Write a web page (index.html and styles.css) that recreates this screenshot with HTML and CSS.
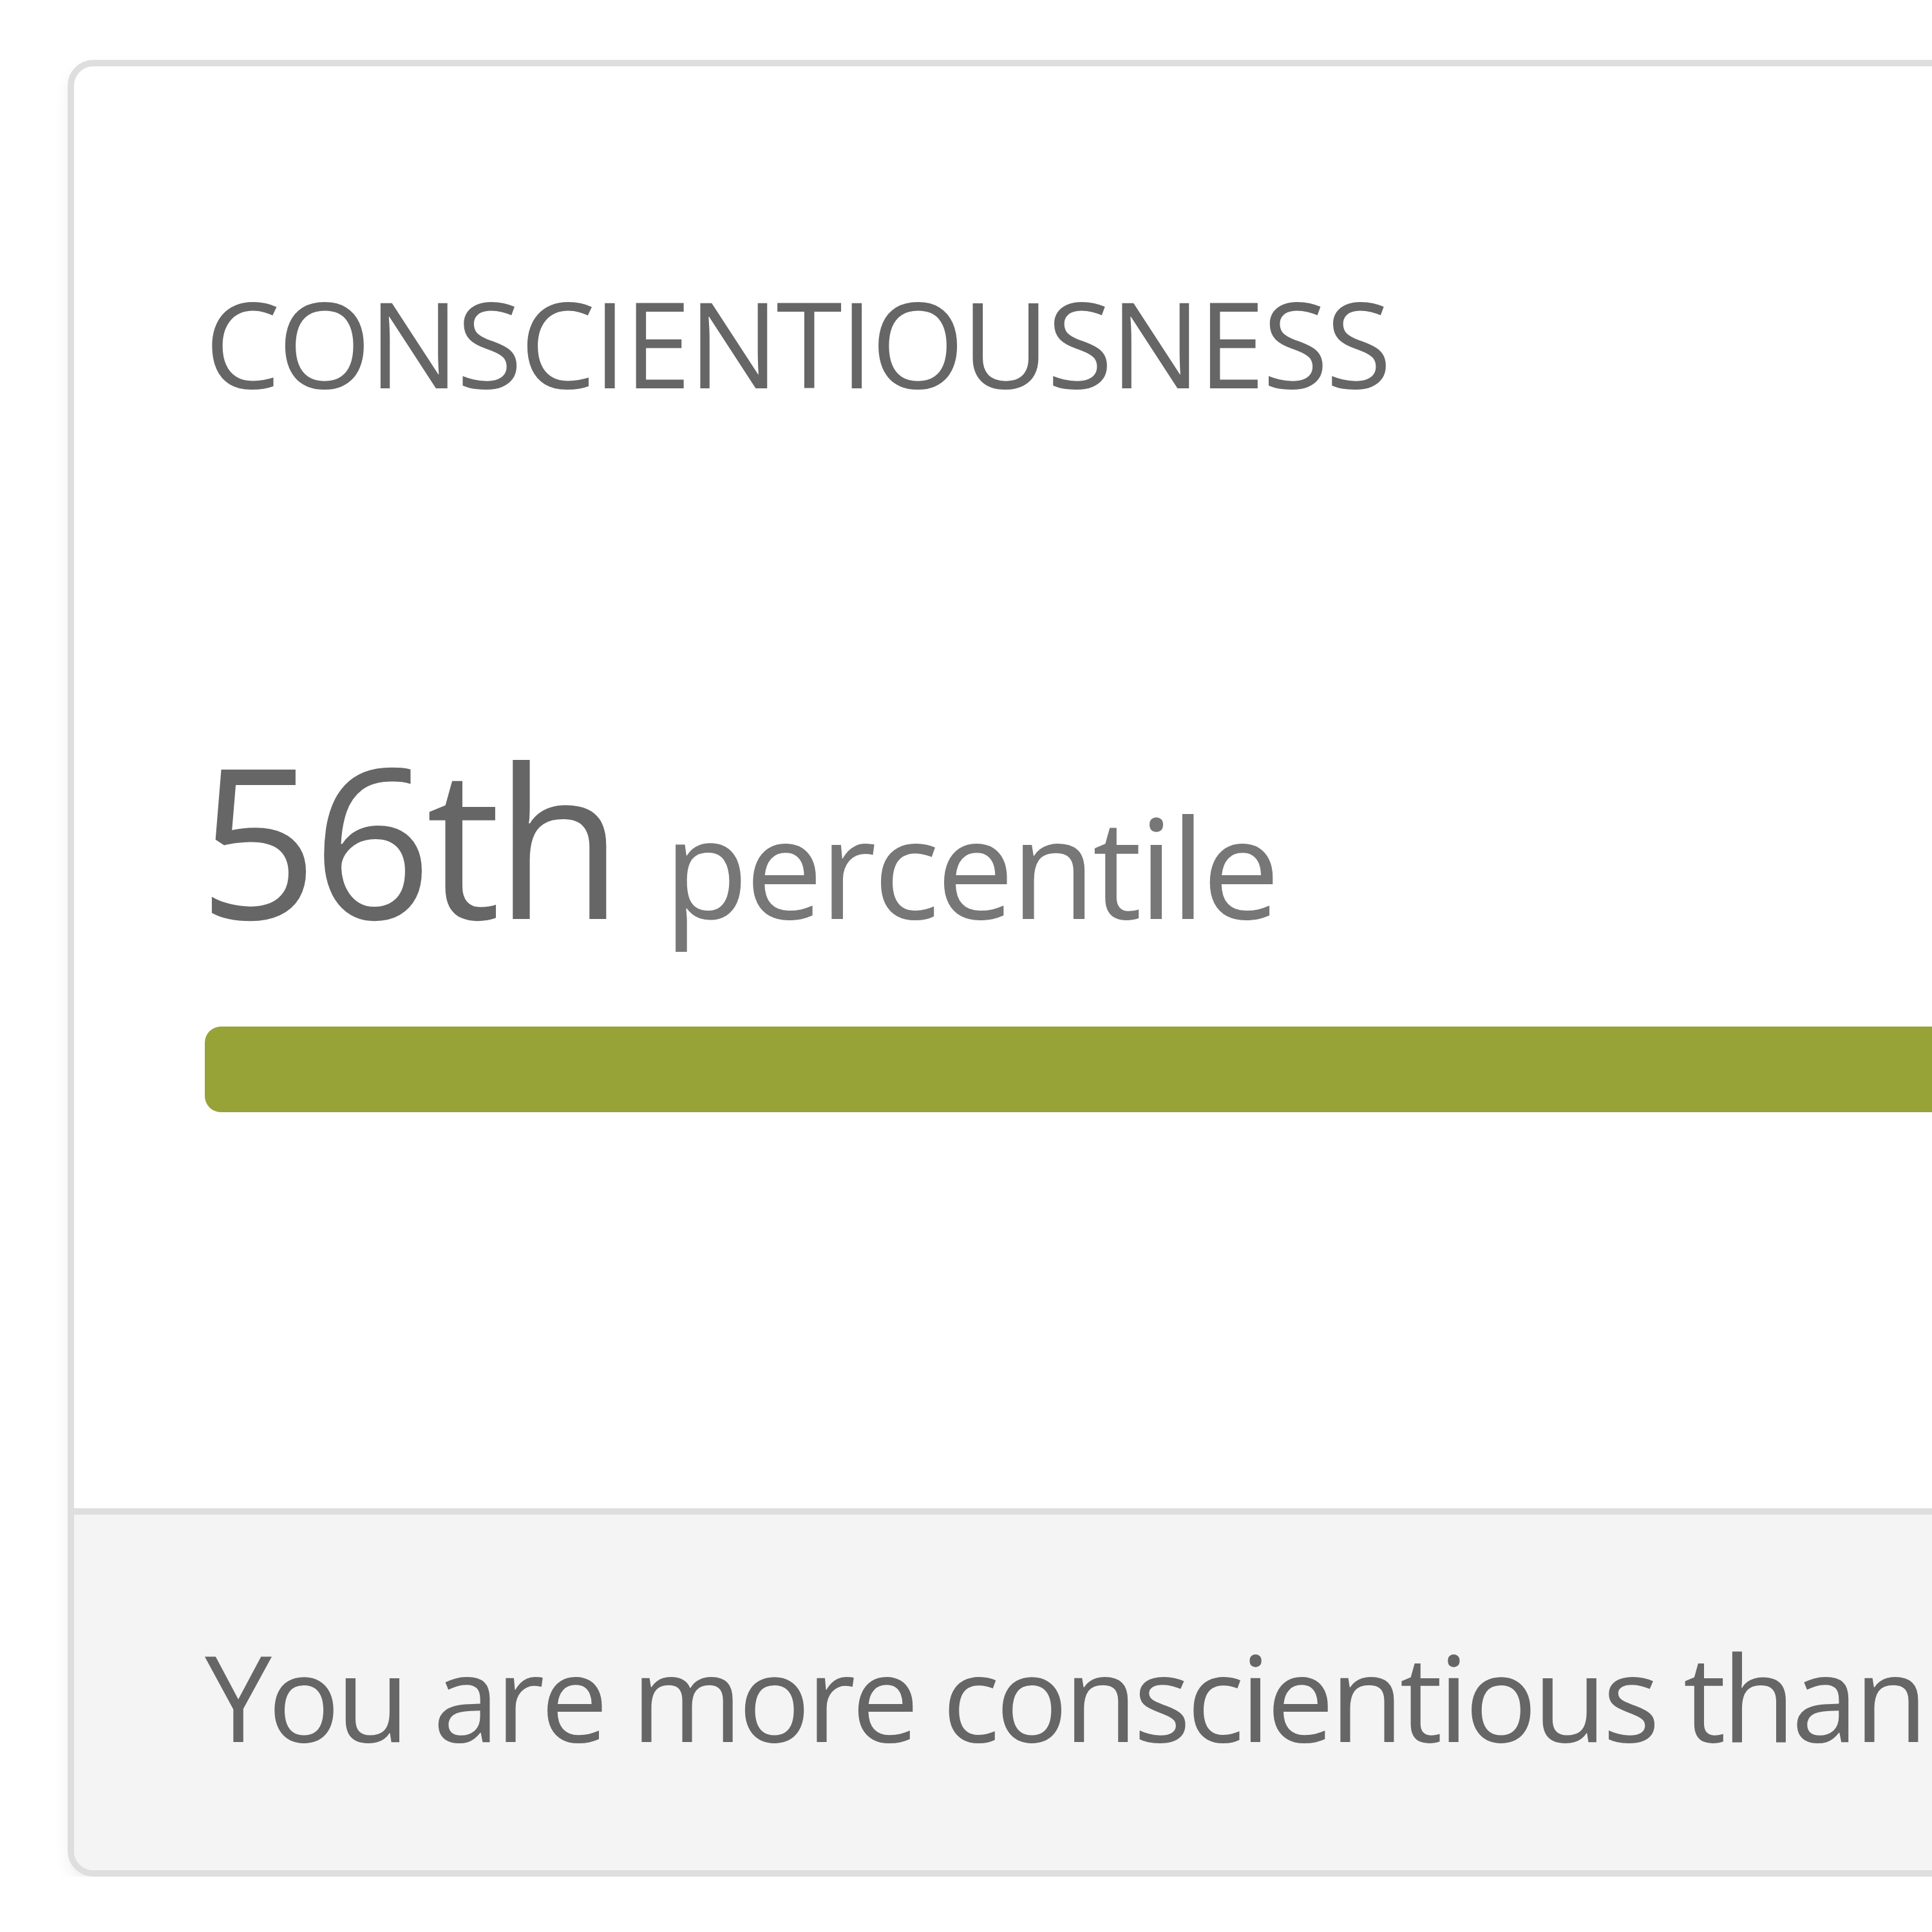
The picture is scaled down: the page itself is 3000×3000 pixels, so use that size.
FILE: index.html
```html
<!DOCTYPE html>
<html lang="en">
<head>
  <meta charset="UTF-8">
  <title>Personality Result</title>
  <link rel="stylesheet" href="styles.css">
</head>
<body>

<div class="trait-card">
  <div class="trait-body">
    <div class="trait-name">Conscientiousness</div>

    <div class="score">
      <span class="score-value">56th</span>
      <span class="score-label">percentile</span>
    </div>

    <div class="score-bar"></div>
  </div>

  <div class="trait-footer">
    You are more conscientious than 56% of people who took this test.
  </div>
</div>

</body>
</html>
```

FILE: styles.css
```css
html, body {
  overflow: hidden;
}

body {
  margin: 0;
  background: #fff;
  font-family: 'Open Sans', 'Noto Sans', sans-serif;
  color: #666;
}

.trait-card {
  margin: 93px 0 0 105px;
  width: 4000px;
  background: white;
  border: 10px solid #dedede;
  border-radius: 40px;
  box-shadow: 0 12px 24px rgba(0,0,0,0.06);
  overflow: hidden;
}

.trait-body {
  padding: 335px 203px 615px;
  border-bottom: 10px solid #dedede;
}

.trait-name {
  font-size: 186px;
  line-height: 1;
  letter-spacing: -3.6px;
  text-transform: uppercase;
}

.score {
  display: flex;
  align-items: baseline;
  gap: 72px;
  margin-top: 515px;
  line-height: 1;
}

.score-value {
  margin-left: -10px;
  font-size: 325px;
  letter-spacing: -9px;
  color: #666;
}

.score-label {
  font-size: 215px;
  letter-spacing: -5px;
  color: #777;
}

.score-bar {
  margin-top: 130px;
  height: 133px;
  border-radius: 25px;
  background: #97a337;
}

.trait-footer {
  background: #f4f4f4;
  padding: 188px 203px 178px 203px;
  font-size: 186px;
  line-height: 1;
  letter-spacing: -6px;
  white-space: nowrap;
}
```
